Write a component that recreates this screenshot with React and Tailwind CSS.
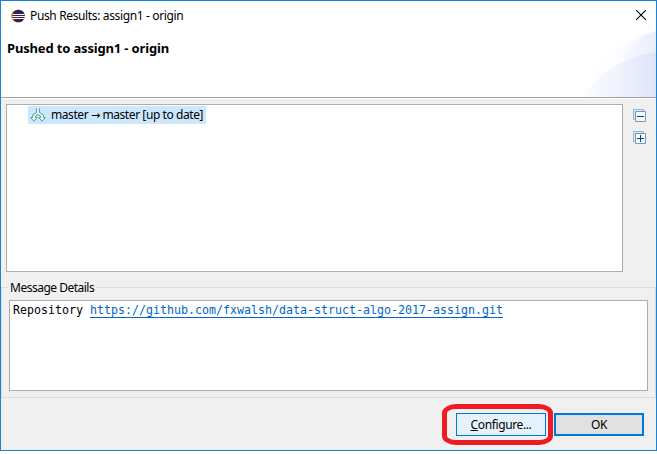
function EclipseLogo() {
  return (
    <svg width="14" height="14" viewBox="0 0 14 14" className="block shrink-0">
      <circle cx="6.5" cy="7" r="6.5" fill="#f7941e" />
      <circle cx="7.6" cy="7" r="6.3" fill="#2c2255" />
      <path d="M1.5 5.5H13.7M1.3 7.5H13.9M1.5 9.5H13.7" stroke="#fff" strokeWidth="1" />
    </svg>
  );
}

function PushIcon() {
  return (
    <svg width="16" height="14" viewBox="0 0 16 14" className="block shrink-0" fill="#e2f5fa" stroke="#5f9f96" strokeWidth="1">
      <path d="M6.5 .5v4L2.5 7v2.5h-2L4 13.3 7.2 9.5H5.5V8L8 6.5 10.5 8v1.5H8.8l3.2 3.8 3.5-3.8h-2V7l-4-2.5v-4" />
    </svg>
  );
}

function TreeToggleIcon({ plus }) {
  return (
    <svg width="13" height="13" viewBox="0 0 13 13" className="block">
      <path d="M.5.5h10v10H.5z" fill="#cfecf6" stroke="#9db5cb" />
      <path d="M2.5 2.5h10v10h-10z" fill="#f2fcff" stroke="#8294b4" />
      <path d={plus ? "M4 7.5h7M7.5 4v7" : "M4 7.5h7"} stroke="#00467f" />
    </svg>
  );
}

function HeaderArt() {
  return (
    <svg width="76" height="66" viewBox="0 0 76 66" className="block">
      <defs>
        <linearGradient id="pale">
          <stop offset="0" stopColor="#fff" />
          <stop offset=".5" stopColor="#fbfcff" />
          <stop offset="1" stopColor="#f3f6fd" />
        </linearGradient>
        <linearGradient id="mid">
          <stop offset="0" stopColor="#f7f9fe" />
          <stop offset="1" stopColor="#e9eefa" />
        </linearGradient>
        <linearGradient id="deep">
          <stop offset="0" stopColor="#fdfdff" />
          <stop offset=".5" stopColor="#edf2fc" />
          <stop offset="1" stopColor="#dee5f7" />
        </linearGradient>
      </defs>
      <path d="M5 66C15 34 43 5 76 0V66z" fill="url(#pale)" />
      <path d="M41 34C49 17 59 5 76 0V34z" fill="url(#mid)" />
      <path d="M3 66C15 47 42 25 76 21V66z" fill="url(#deep)" />
    </svg>
  );
}

export default function App() {
  return (
    <div className="h-[454px] w-[657px] overflow-hidden bg-white font-['Noto_Sans','Open_Sans',sans-serif] text-[12px] leading-4 text-black">
      <div className="flex h-[451px] flex-col border border-[#1883d7] bg-[#f0f0f0]">
        <header className="flex h-[98px] justify-between border-b border-white bg-white">
          <div className="flex w-full justify-between border-b border-[#a0a0a0]">
            <div className="pt-[7px]">
              <div className="flex items-center pl-[10px]">
                <EclipseLogo />
                <h1 className="ml-[5px] whitespace-nowrap tracking-[-0.36px]">Push Results: assign1 - origin</h1>
              </div>
              <h2 className="mt-4 whitespace-nowrap pl-[6px] text-[13px] font-bold leading-4 tracking-[-0.16px]">Pushed to assign1 - origin</h2>
            </div>
            <div className="flex flex-col items-end justify-between">
              <svg width="10" height="10" viewBox="0 0 10 10" className="mr-[10px] mt-[9px]">
                <path d="M0 0L10 10M10 0L0 10" stroke="#000" strokeWidth="1.1" />
              </svg>
              <HeaderArt />
            </div>
          </div>
        </header>

        <section className="flex pl-[5px] pt-[5px]">
          <div className="h-[168px] w-[617px] border border-[#abadb3] bg-white pl-[21px] pt-px">
            <div className="flex h-[18px] w-[178px] items-center bg-[#cce8ff] pl-[2px]">
              <PushIcon />
              <span className="ml-[5px] whitespace-nowrap tracking-[-0.42px]">
                master <span className="font-['DejaVu_Sans',sans-serif] text-[11px]">→</span> master [up to date]
              </span>
            </div>
          </div>
          <div className="ml-[10px] mt-[5px] flex flex-col gap-[9px]">
            <TreeToggleIcon />
            <TreeToggleIcon plus />
          </div>
        </section>

        <section className="mt-[8px] h-[118px]">
          <div className="flex h-4 items-start">
            <div className="mt-[7px] h-px w-[7px] bg-[#dcdcdc]" />
            <h3 className="whitespace-nowrap px-[2px] tracking-[-0.5px]">Message Details</h3>
            <div className="mt-[7px] h-px flex-1 bg-[#dcdcdc]" />
          </div>
          <div className="-mt-2 h-[110px] border-x border-b border-[#dcdcdc] px-[7px] pt-[12px]">
            <div className="h-[91px] w-[639px] whitespace-pre border border-[#abadb3] bg-white pl-[3px] pt-px font-['DejaVu_Sans_Mono',monospace] text-[11.63px] leading-4">
              Repository <a className="text-[#0066cc] underline decoration-1 underline-offset-[3px] [text-decoration-skip-ink:none]">https://github.com/fxwalsh/data-struct-algo-2017-assign.git</a>
            </div>
          </div>
        </section>

        <footer className="relative mt-[15px] flex gap-[8px] pl-[455px]">
          <button className="h-[23px] w-[90px] border border-[#0078d7] bg-[#e5f1fb] tracking-[-0.38px]">
            <span className="underline">C</span>onfigure...
          </button>
          <button className="h-[23px] w-[90px] border-2 border-[#0078d7] bg-[#e1e1e1] tracking-[-0.3px]">OK</button>
          <div className="absolute -top-[9px] left-[441px] h-[41px] w-[111px] rounded-[14px/9px] border-[5px] border-[#ed1c24]" />
        </footer>
      </div>
    </div>
  );
}
